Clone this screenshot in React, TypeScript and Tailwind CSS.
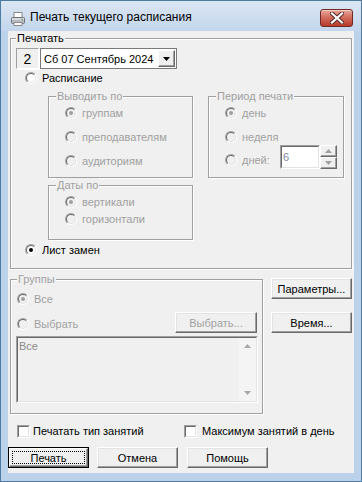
import React from "react";

const FONT = "font-['Liberation_Sans',Arial,sans-serif]";

function Radio({ checked, disabled }: { checked?: boolean; disabled?: boolean }) {
  return (
    <span className="relative inline-block w-[12px] h-[12px] shrink-0 rounded-full border border-t-[#a0a0a0] border-l-[#a0a0a0] border-b-white border-r-white">
      <span
        className={
          disabled
            ? "absolute inset-0 rounded-full border border-t-[#696969] border-l-[#696969] border-b-[#e3e3e3] border-r-[#e3e3e3] bg-[#f0f0f0]"
            : "absolute inset-0 rounded-full border border-t-[#696969] border-l-[#696969] border-b-[#e3e3e3] border-r-[#e3e3e3] bg-white"
        }
      />
      {checked && (
        <span
          className={
            disabled
              ? "absolute left-[3px] top-[3px] w-[4px] h-[4px] rounded-full bg-[#a0a0a0]"
              : "absolute left-[3px] top-[3px] w-[4px] h-[4px] rounded-full bg-black"
          }
        />
      )}
    </span>
  );
}

function RadioRow({
  label,
  checked,
  disabled,
}: {
  label: string;
  checked?: boolean;
  disabled?: boolean;
}) {
  return (
    <div className="flex items-center h-[16px] gap-[5px]">
      <Radio checked={checked} disabled={disabled} />
      <span className={disabled ? "text-[#a0a0a0] leading-[14px]" : "text-black leading-[14px]"}>{label}</span>
    </div>
  );
}

function Checkbox() {
  return (
    <span className="inline-block w-[13px] h-[13px] shrink-0 border border-t-[#a0a0a0] border-l-[#a0a0a0] border-b-white border-r-white">
      <span className="block w-full h-full border border-t-[#696969] border-l-[#696969] border-b-[#e3e3e3] border-r-[#e3e3e3] bg-white" />
    </span>
  );
}

function Button({
  label,
  disabled,
  isDefault,
  className = "",
}: {
  label: string;
  disabled?: boolean;
  isDefault?: boolean;
  className?: string;
}) {
  if (isDefault) {
    return (
      <div className={"h-[21px] border border-[#000] bg-[#f0f0f0] " + className}>
        <div className="w-full h-full border border-t-white border-l-white border-b-[#696969] border-r-[#696969] shadow-[inset_-1px_-1px_0_#a0a0a0] flex items-center justify-center">
          <div className="w-[73px] h-[13px] border border-dotted border-black flex items-center justify-center leading-[12px] text-black">
            {label}
          </div>
        </div>
      </div>
    );
  }
  return (
    <div
      className={
        "h-[21px] border border-t-white border-l-white border-b-[#696969] border-r-[#696969] shadow-[inset_-1px_-1px_0_#a0a0a0,inset_1px_1px_0_#e3e3e3] bg-[#f0f0f0] flex items-center justify-center leading-[14px] " +
        (disabled ? "text-[#a0a0a0] " : "text-black ") +
        className
      }
    >
      {label}
    </div>
  );
}

function GroupBox({
  title,
  disabled,
  legendLeft,
  className = "",
  children,
}: {
  title: string;
  disabled?: boolean;
  legendLeft: string;
  className?: string;
  children?: React.ReactNode;
}) {
  return (
    <div
      className={
        "relative border border-[#a0a0a0] shadow-[inset_1px_1px_0_#fff,1px_1px_0_#fff] " + className
      }
    >
      <span
        className={
          legendLeft +
          " absolute top-[-8px] px-[1px] bg-[#f0f0f0] leading-[14px] whitespace-nowrap " +
          (disabled ? "text-[#a0a0a0]" : "text-black")
        }
      >
        {title}
      </span>
      {children}
    </div>
  );
}

function PrinterIcon() {
  return (
    <svg width="16" height="16" viewBox="0 0 16 16">
      <rect x="4" y="1.5" width="8" height="5" fill="#fff" stroke="#8a8a8a" />
      <rect x="1.5" y="6.5" width="13" height="6" rx="1" fill="#b8bcc2" stroke="#6e7379" />
      <rect x="2" y="7" width="12" height="2" fill="#d6d9dd" />
      <rect x="4" y="11.5" width="8" height="3" fill="#fff" stroke="#8a8a8a" />
      <rect x="11.5" y="8" width="1.5" height="1" fill="#4c9a3a" />
    </svg>
  );
}

function CloseButton() {
  return (
    <div className="w-[33px] h-[18px] rounded-[3px] border border-[#6d2a22] bg-gradient-to-b from-[#e8a89c] via-[#d0685a] to-[#b8392b] flex items-center justify-center shadow-[inset_0_1px_0_rgba(255,255,255,0.45)]">
      <svg width="14" height="12" viewBox="0 0 14 12">
        <path d="M2 1.5 L12 10.5 M12 1.5 L2 10.5" stroke="#5a2a25" strokeWidth="4.2" strokeLinecap="square" />
        <path d="M2 1.5 L12 10.5 M12 1.5 L2 10.5" stroke="#ffffff" strokeWidth="2.2" strokeLinecap="square" />
      </svg>
    </div>
  );
}

function ArrowDown({ color = "#000" }: { color?: string }) {
  return (
    <svg width="7" height="4" viewBox="0 0 7 4">
      <path d="M0 0 H7 L3.5 4 Z" fill={color} />
    </svg>
  );
}

function ArrowUp({ color = "#000" }: { color?: string }) {
  return (
    <svg width="7" height="4" viewBox="0 0 7 4">
      <path d="M0 4 H7 L3.5 0 Z" fill={color} />
    </svg>
  );
}

export default function App() {
  return (
    <div className={"w-[362px] h-[482px] " + FONT + " text-[11px]"}>
      <div className="w-[362px] h-[482px] border border-[#4e7ba1] bg-[#bcd2ea] flex flex-col">
        {/* Title bar */}
        <div className="h-[30px] flex items-start bg-gradient-to-b from-[#dbe6f3] to-[#c3d6ec]">
          <div className="ml-[9px] mt-[10px]">
            <PrinterIcon />
          </div>
          <div className="ml-[4px] mt-[9px] text-[12px] leading-[15px] text-black">
            Печать текущего расписания
          </div>
          <div className="ml-auto mr-[8px] mt-[8px]">
            <CloseButton />
          </div>
        </div>

        {/* Client area */}
        <div className="mx-[7px] h-[442px] bg-[#f0f0f0] flex flex-col px-[2px]">
          {/* Печатать group */}
          <GroupBox title="Печатать" legendLeft="left-[5px]" className="mt-[7px] h-[231px]">
            <div className="flex flex-col">
              {/* date row */}
              <div className="mt-[9px] ml-[5px] flex h-[21px]">
                <div className="w-[23px] h-[21px] border border-t-[#a0a0a0] border-l-[#a0a0a0] border-b-white border-r-white shadow-[1px_1px_0_#fff] flex items-center justify-center text-[14px] leading-[16px] text-black">
                  2
                </div>
                <div className="ml-[1px] w-[137px] h-[21px] border border-[#7a7a7a] bg-white flex items-center">
                  <span className="pl-[3px] text-black leading-[14px] whitespace-nowrap">Сб 07 Сентябрь 2024</span>
                  <div className="ml-auto mr-[1px] w-[17px] h-[17px] border border-t-white border-l-white border-b-[#696969] border-r-[#696969] shadow-[inset_-1px_-1px_0_#a0a0a0] bg-[#f0f0f0] flex items-center justify-center">
                    <ArrowDown />
                  </div>
                </div>
              </div>

              {/* Расписание */}
              <div className="mt-[1px] ml-[14px]">
                <RadioRow label="Расписание" />
              </div>

              {/* sub groups */}
              <div className="mt-[10px] ml-[37px] flex gap-[15px]">
                <GroupBox title="Выводить по" disabled legendLeft="left-[7px]" className="w-[145px] h-[82px]">
                  <div className="flex flex-col pl-[16px] pt-[8px] gap-[8px]">
                    <RadioRow label="группам" checked disabled />
                    <RadioRow label="преподавателям" disabled />
                    <RadioRow label="аудиториям" disabled />
                  </div>
                </GroupBox>
                <GroupBox title="Период печати" disabled legendLeft="left-[7px]" className="w-[136px] h-[82px]">
                  <div className="flex flex-col pl-[16px] pt-[8px]">
                    <RadioRow label="день" checked disabled />
                    <div className="mt-[8px]">
                      <RadioRow label="неделя" disabled />
                    </div>
                    <div className="flex items-start">
                      <div className="w-[55px] mt-[7px]">
                        <RadioRow label="дней:" disabled />
                      </div>
                      <div className="w-[40px] h-[24px] border border-t-[#a0a0a0] border-l-[#a0a0a0] border-b-white border-r-white">
                        <div className="w-full h-full border border-t-[#696969] border-l-[#696969] border-b-[#e3e3e3] border-r-[#e3e3e3] bg-white pl-[1px] pt-[3px] text-[#7d8aa6] leading-[14px]">
                          6
                        </div>
                      </div>
                      <div className="w-[17px] h-[24px] flex flex-col">
                        <div className="h-[12px] border border-t-white border-l-white border-b-[#696969] border-r-[#696969] shadow-[inset_-1px_-1px_0_#a0a0a0] bg-[#f0f0f0] flex items-center justify-center">
                          <ArrowUp color="#a0a0a0" />
                        </div>
                        <div className="h-[12px] border border-t-white border-l-white border-b-[#696969] border-r-[#696969] shadow-[inset_-1px_-1px_0_#a0a0a0] bg-[#f0f0f0] flex items-center justify-center">
                          <ArrowDown color="#a0a0a0" />
                        </div>
                      </div>
                    </div>
                  </div>
                </GroupBox>
              </div>

              {/* Даты по */}
              <GroupBox title="Даты по" disabled legendLeft="left-[7px]" className="mt-[7px] ml-[37px] w-[145px] h-[55px]">
                <div className="flex flex-col pl-[16px] pt-[8px] gap-[1px]">
                  <RadioRow label="вертикали" checked disabled />
                  <RadioRow label="горизонтали" disabled />
                </div>
              </GroupBox>

              {/* Лист замен */}
              <div className="mt-[2px] ml-[14px]">
                <RadioRow label="Лист замен" checked />
              </div>
            </div>
          </GroupBox>

          {/* Группы + right buttons */}
          <div className="mt-[9px] flex">
            <GroupBox title="Группы" disabled legendLeft="left-[6px]" className="mt-[1px] w-[254px] h-[135px]">
              <div className="flex flex-col">
                <div className="mt-[11px] ml-[6px]">
                  <RadioRow label="Все" checked disabled />
                </div>
                <div className="mt-[5px] flex h-[21px]">
                  <div className="ml-[6px] mt-[4px]">
                    <RadioRow label="Выбрать" disabled />
                  </div>
                  <Button label="Выбрать..." disabled className="ml-auto mr-[5px] w-[82px]" />
                </div>
                <div className="mt-[3px] ml-[5px] w-[242px] h-[67px] border border-t-[#a0a0a0] border-l-[#a0a0a0] border-b-white border-r-white">
                  <div className="w-full h-full border border-t-[#696969] border-l-[#696969] border-b-[#e3e3e3] border-r-[#e3e3e3] bg-[#f0f0f0] flex">
                    <div className="flex-1 pl-[1px] pt-[1px] text-[#8a8a8a] leading-[14px]">Все</div>
                    <div className="w-[17px] h-full bg-[#f4f4f4] flex flex-col items-center justify-between py-[6px]">
                      <ArrowUp color="#a8a8a8" />
                      <ArrowDown color="#a8a8a8" />
                    </div>
                  </div>
                </div>
              </div>
            </GroupBox>
            <div className="ml-[8px] w-[81px] flex flex-col">
              <Button label="Параметры..." className="w-[81px]" />
              <Button label="Время..." className="mt-[13px] w-[81px]" />
            </div>
          </div>

          {/* Checkboxes */}
          <div className="mt-[9px] flex h-[16px] items-center -mx-[2px]">
            <div className="w-[176px] pl-[9px] flex items-center gap-[3px]">
              <Checkbox />
              <span className="text-black leading-[14px]">Печатать тип занятий</span>
            </div>
            <div className="flex items-center gap-[5px]">
              <Checkbox />
              <span className="text-black leading-[14px]">Максимум занятий в день</span>
            </div>
          </div>

          {/* Bottom buttons */}
          <div className="mt-[8px] flex -mx-[2px]">
            <Button label="Печать" isDefault className="w-[81px]" />
            <Button label="Отмена" className="ml-[8px] w-[81px]" />
            <Button label="Помощь" className="ml-[9px] w-[81px]" />
          </div>
        </div>
      </div>
    </div>
  );
}
